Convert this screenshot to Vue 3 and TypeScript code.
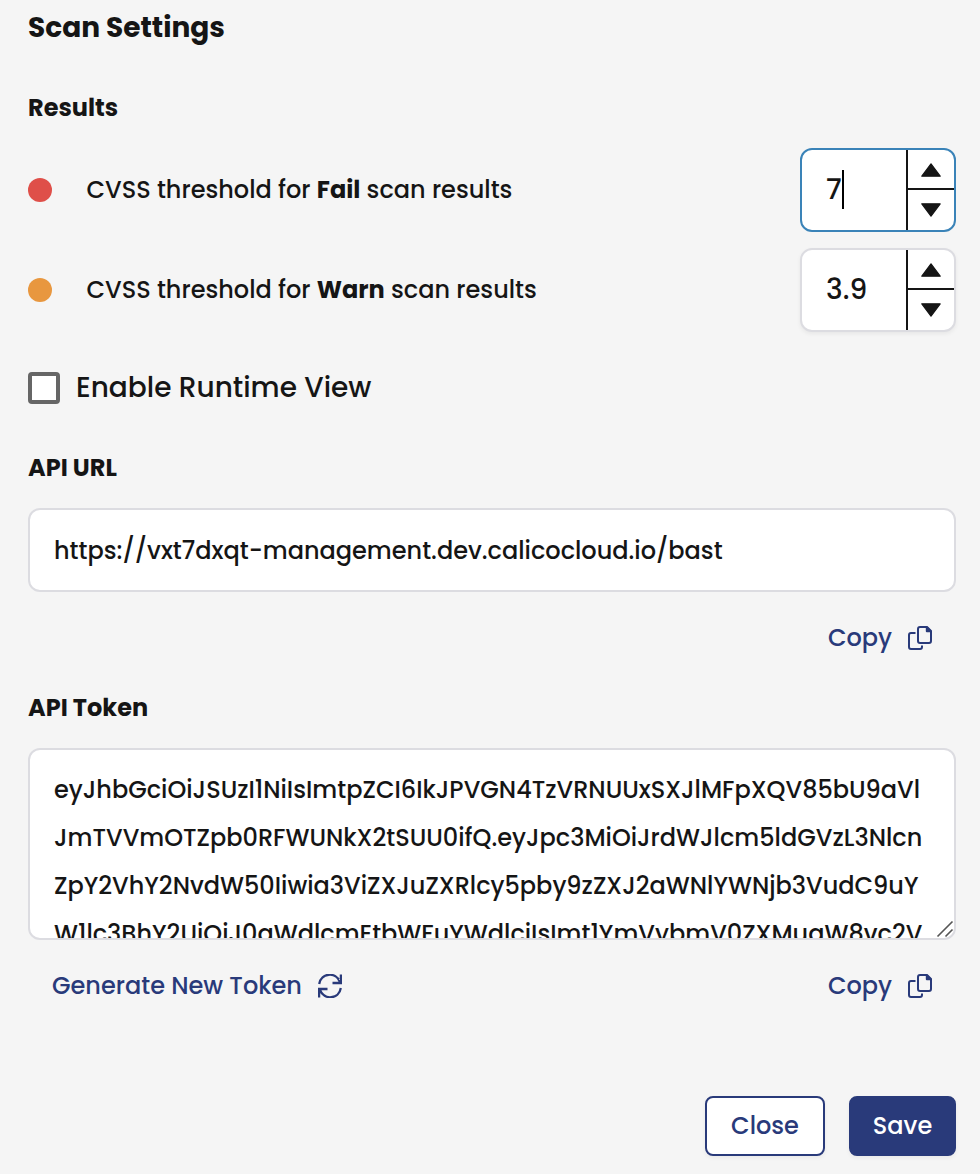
<script setup lang="ts">
import { ref } from 'vue'

interface Threshold {
  id: string
  level: string
  value: string
  focused: boolean
}

const thresholds = ref<Threshold[]>([
  { id: 'fail', level: 'Fail', value: '7', focused: true },
  { id: 'warn', level: 'Warn', value: '3.9', focused: false },
])

const apiUrl = 'https://vxt7dxqt-management.dev.calicocloud.io/bast'

const tokenLines: string[] = [
  'eyJhbGciOiJSUzI1NiIsImtpZCI6IkJPVGN4TzVRNUUxSXJlMFpXQV85bU9aVl',
  'JmTVVmOTZpb0RFWUNkX2tSUU0ifQ.eyJpc3MiOiJrdWJlcm5ldGVzL3Nlcn',
  'ZpY2VhY2NvdW50Iiwia3ViZXJuZXRlcy5pby9zZXJ2aWNlYWNjb3VudC9uY',
  'W1lc3BhY2UiOiJ0aWdlcmEtbWFuYWdlciIsImt1YmVybmV0ZXMuaW8vc2V',
]
</script>

<template>
  <main class="panel">
    <h1 class="title">Scan Settings</h1>

    <h2 class="heading results">Results</h2>
    <div class="thresholds">
      <div v-for="t in thresholds" :key="t.id" class="threshold" :class="t.id">
        <i class="dot"></i>
        <p class="label">CVSS threshold for <b>{{ t.level }}</b> scan results</p>
        <div class="number" :class="{ focused: t.focused }">
          <div class="value">{{ t.value }}<i v-if="t.focused" class="caret"></i></div>
          <div class="steppers">
            <div class="step">
              <svg width="20" height="14" viewBox="0 0 20 14"><path d="M10 .8 19.2 13.2H.8Z" fill="#151515" stroke="#151515" stroke-width="1.2" stroke-linejoin="round" /></svg>
            </div>
            <div class="step">
              <svg width="20" height="14" viewBox="0 0 20 14"><path d="M10 13.2 .8 .8H19.2Z" fill="#151515" stroke="#151515" stroke-width="1.2" stroke-linejoin="round" /></svg>
            </div>
          </div>
        </div>
      </div>
    </div>

    <div class="runtime"><i class="box"></i><span>Enable Runtime View</span></div>

    <h2 class="heading url-heading">API URL</h2>
    <div class="field">{{ apiUrl }}</div>
    <div class="links url-links">
      <a class="link copy">
        <span>Copy</span>
        <svg width="24" height="24" viewBox="0 0 24 24" fill="none" stroke="#293a7a" stroke-width="2" stroke-linejoin="round"><path d="M7.5 7H3Q1 7 1 9V21Q1 23 3 23H12Q14 23 14 21V19.5" /><path d="M12 1H19L23 5V15Q23 17 21 17H12Q10 17 10 15V3Q10 1 12 1Z" /><path d="M18.8 1.5V5.2H22.5Z" fill="#293a7a" /></svg>
      </a>
    </div>

    <h2 class="heading token-heading">API Token</h2>
    <div class="token">
      <div v-for="line in tokenLines" :key="line" class="line">{{ line }}</div>
      <svg class="grip" width="18" height="18" viewBox="0 0 18 18" fill="none"><path d="M1.5 16.5 16.5 1.5M9.5 16.5 16.5 9.5" stroke="#555" stroke-width="1.6" /></svg>
    </div>
    <div class="links token-links">
      <a class="link generate">
        <span>Generate New Token</span>
        <svg width="24" height="24" viewBox="0 0 24 24" fill="none" stroke="#293a7a" stroke-width="2.3"><path d="M1.2 10C3-1.5 18-2.5 22 8M22.9 .5V9H14.5" /><path d="M22.8 14C21 25.500 6 26.5 2 16M1.1 23.5V15H9.5" /></svg>
      </a>
      <a class="link copy">
        <span>Copy</span>
        <svg width="24" height="24" viewBox="0 0 24 24" fill="none" stroke="#293a7a" stroke-width="2" stroke-linejoin="round"><path d="M7.5 7H3Q1 7 1 9V21Q1 23 3 23H12Q14 23 14 21V19.5" /><path d="M12 1H19L23 5V15Q23 17 21 17H12Q10 17 10 15V3Q10 1 12 1Z" /><path d="M18.8 1.5V5.2H22.5Z" fill="#293a7a" /></svg>
      </a>
    </div>

    <footer class="footer">
      <button class="btn close" type="button">Close</button>
      <button class="btn save" type="button">Save</button>
    </footer>
  </main>
</template>

<style>
body { background: #f5f5f5; }
</style>

<style scoped>
.panel {
  box-sizing: border-box;
  width: 980px;
  height: 1174px;
  padding: 7px 24px 0 28px;
  overflow: hidden;
  background: #f5f5f5;
  color: #151515;
  font: 500 24px/36px Poppins, Inter, sans-serif;
  white-space: nowrap;
}
h1, h2, p { margin: 0; }
.title { font-size: 28px; line-height: 42px; font-weight: 700; }
.heading { font-size: 24px; line-height: 36px; font-weight: 700; }
.results { margin-top: 41px; }
.thresholds { display: grid; gap: 16px; margin-top: 22px; }
.threshold { display: flex; align-items: center; height: 84px; }
.dot { width: 24px; height: 24px; border-radius: 50%; margin-right: 34.5px; }
.fail .dot { background: #df4f49; }
.warn .dot { background: #e8973f; }
.label { flex: 1; font-weight: 500; }
.label b { font-weight: 700; }
.number {
  box-sizing: border-box;
  display: flex;
  width: 156px;
  height: 84px;
  border: 2px solid #dcdce1;
  border-radius: 12px;
  background: #fff;
  box-shadow: 0 2px 4px rgba(0, 0, 0, .06);
  overflow: hidden;
}
.number.focused { border-color: #3a83b8; box-shadow: none; }
.value { flex: 1; display: flex; align-items: center; padding-left: 24px; font-size: 28px; font-weight: 500; }
.caret { width: 2px; height: 39px; margin-top: -1px; background: #000; }
.steppers { width: 46px; border-left: 2px solid #151515; display: grid; grid-template-rows: 40px 40px; }
.step { box-sizing: border-box; display: flex; align-items: center; justify-content: center; }
.step:first-child { border-bottom: 2px solid #151515; padding-top: 2px; }
.runtime { display: flex; align-items: center; gap: 16px; height: 42px; margin-top: 35px; font-size: 28px; }
.box { box-sizing: border-box; width: 32px; height: 32px; border: 4px solid #666; border-radius: 4px; background: #fff; }
.url-heading { margin-top: 41px; }
.field, .token {
  box-sizing: border-box;
  border: 2px solid #dcdce1;
  border-radius: 12px;
  background: #fff;
  padding: 0 24px;
}
.field { height: 84px; margin-top: 22px; line-height: 82px; }
.links { display: flex; justify-content: space-between; align-items: center; height: 36px; padding: 0 24px; color: #293a7a; }
.url-links { justify-content: flex-end; margin-top: 28px; }
.link { display: flex; align-items: center; gap: 16px; }
.token-heading { margin-top: 34px; }
.token { position: relative; height: 192px; margin-top: 22px; padding-top: 16px; overflow: hidden; line-height: 48px; }
.grip { position: absolute; right: 0; bottom: 0; }
.token-links { margin-top: 28px; }
.footer { display: flex; justify-content: flex-end; gap: 24px; margin-top: 92px; }
.btn {
  box-sizing: border-box;
  height: 60px;
  padding: 0;
  border: 2px solid #293a7a;
  border-radius: 8px;
  box-shadow: 0 2px 4px rgba(0, 0, 0, .05);
  font: inherit;
}
.close { width: 120px; background: #fff; color: #293a7a; }
.save { width: 107px; background: #293a7a; color: #fff; }
</style>
